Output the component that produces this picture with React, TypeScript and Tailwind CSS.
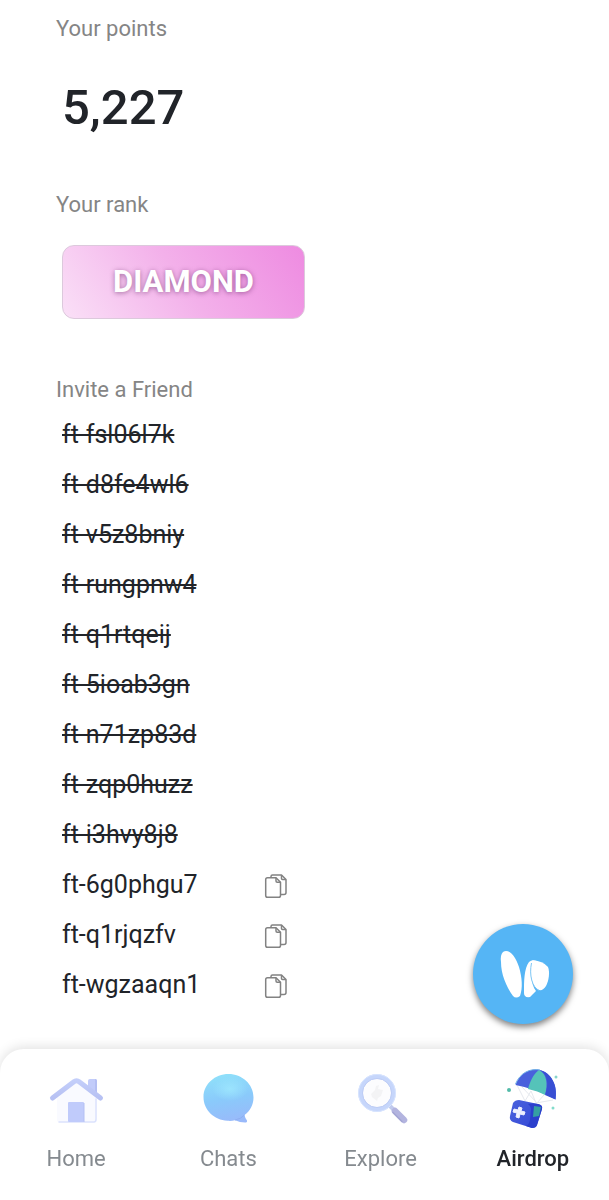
import { useState } from "react";

const invites = [
  { code: "ft-fsl06l7k", used: true },
  { code: "ft-d8fe4wl6", used: true },
  { code: "ft-v5z8bniy", used: true },
  { code: "ft-rungpnw4", used: true },
  { code: "ft-q1rtqeij", used: true },
  { code: "ft-5ioab3gn", used: true },
  { code: "ft-n71zp83d", used: true },
  { code: "ft-zqp0huzz", used: true },
  { code: "ft-i3hvy8j8", used: true },
  { code: "ft-6g0phgu7", used: false },
  { code: "ft-q1rjqzfv", used: false },
  { code: "ft-wgzaaqn1", used: false },
];

function CopyIcon() {
  return (
    <svg viewBox="0 0 24 26" className="h-[26px] w-6" fill="none" stroke="#828282" strokeWidth="1.5" strokeLinejoin="round">
      <path d="M7 4V3.500Q7 2 8.500 2H17.500L22 6.500V19.500Q22 21.500 20 21.500H17" />
      <path d="M17.500 2V5.500Q17.500 6.500 18.500 6.500H22" />
      <path d="M3.500 4.700H12L16.500 9.200V22.500Q16.500 24.300 14.700 24.300H3.500Q1.700 24.300 1.700 22.500V6.500Q1.700 4.700 3.500 4.700Z" />
      <path d="M12 4.700V8Q12 9.200 13.200 9.200H16.500" />
    </svg>
  );
}

function HomeIcon() {
  return (
    <svg viewBox="0 0 60 60" className="size-[60px]">
      <defs>
        <linearGradient id="roof" x1="0" y1="0" x2="0" y2="1">
          <stop offset="0" stopColor="#c3cefa" />
          <stop offset="1" stopColor="#b7c1f3" />
        </linearGradient>
      </defs>
      <path d="M42 12Q42 10 44 10H49Q51 10 51 12V27L42 20Z" fill="#c2ccfa" />
      <path d="M49 10Q51 10 51 12V27L49 25Z" fill="#b4bff3" />
      <path d="M30 12L51 28V51Q51 53 49 53H13Q11 53 11 51V28Z" fill="#f9faff" />
      <path d="M50 30V50Q50 53 48 53H13" fill="none" stroke="#dbe2fd" strokeWidth="1.5" strokeLinecap="round" />
      <path d="M6.5 29L27.500 13Q30.500 10.500 33.500 13L54.500 29" fill="none" stroke="url(#roof)" strokeWidth="5" strokeLinecap="round" />
      <rect x="22" y="33" width="16" height="20" rx="1" fill="#c0cbfb" />
      <path d="M38 34V53" stroke="#b4bff3" strokeWidth="1" />
    </svg>
  );
}

function ChatsIcon() {
  return (
    <svg viewBox="0 0 60 60" className="size-[60px]">
      <defs>
        <linearGradient id="bubble" x1="0.4" y1="0" x2="0.6" y2="1">
          <stop offset="0" stopColor="#8fe0fa" />
          <stop offset="0.5" stopColor="#8acafb" />
          <stop offset="1" stopColor="#99b9fa" />
        </linearGradient>
        <radialGradient id="bubbleLight" cx="0.5" cy="0.5" r="0.5">
          <stop offset="0" stopColor="#a2ecff" stopOpacity="0.7" />
          <stop offset="1" stopColor="#a2ecff" stopOpacity="0" />
        </radialGradient>
      </defs>
      <path d="M30.500 5C44 5 55.500 15 55.500 28.500C55.500 36 52 42 46.500 46Q47 49 49 51.500Q49.500 53.500 47 53.500Q42 53.500 37 51.300C34 52 32 52 29.500 51.800C16 51 5.500 41 5.500 28C5.500 15 17 5 30.500 5Z" fill="url(#bubble)" />
      <ellipse cx="32" cy="20" rx="18" ry="12" fill="url(#bubbleLight)" />
      <path d="M37 51Q43 50 46.500 46" fill="none" stroke="#8eaef2" strokeWidth="1" />
    </svg>
  );
}

function ExploreIcon() {
  return (
    <svg viewBox="0 0 60 60" className="size-[60px]">
      <path d="M39 37L43 41" stroke="#c1caed" strokeWidth="4" />
      <path d="M44 42L53 51" stroke="#b3b4df" strokeWidth="6.500" strokeLinecap="round" />
      <path d="M42 43.500L51 52.500" stroke="#a3a5d4" strokeWidth="1.500" strokeLinecap="round" />
      <circle cx="26" cy="24" r="16.500" fill="#fcfcfe" stroke="#c6d6fb" strokeWidth="4.500" />
      <circle cx="26" cy="24" r="18.500" fill="none" stroke="#d7e4ff" strokeWidth="1" />
      <circle cx="26" cy="24" r="14.500" fill="none" stroke="#bccbf5" strokeWidth="1" />
      <path d="M25 17L28 16L27 20L32 21L30 27L27 29L26 32L21 28L20 25L24 21Z" fill="#f3f3f5" />
    </svg>
  );
}

function AirdropIcon() {
  return (
    <svg viewBox="0 0 60 66" className="h-[66px] w-[60px]">
      <defs>
        <linearGradient id="crate" x1="0" y1="0" x2="1" y2="1">
          <stop offset="0" stopColor="#4a62dd" />
          <stop offset="1" stopColor="#3346d6" />
        </linearGradient>
      </defs>
      <g fill="none" stroke="#e6e9ee" strokeWidth="1">
        <path d="M14 19L22 35L28 25L33 37L50 34" />
        <path d="M19 21L34 37L41 29" />
      </g>
      <path d="M12.500 19C17 7 27 2 37 4C48 7 55 19 52.500 33.500Q34 23 12.500 19Z" fill="#4961dc" />
      <path d="M36 4C30 8 27 16 25 23Q35 25 42 29C45 18 44 8 36 4Z" fill="#55c3b9" />
      <path d="M37 4C45 9 46 19 42 29L52.500 33.500C55 19 48 7 37 4Z" fill="#384fd3" />
      <path d="M12.500 18C17 7 27 2 37 4" fill="none" stroke="#6eafe7" strokeWidth="1" />
      <path d="M10 37Q12 34 16 34L35 38Q40 39 39 43L34 59Q33 62 29 62L10 56Q6 54 7 50Z" fill="url(#crate)" />
      <path d="M25 38Q30 37 35 38Q40 39 39 43L34 59Q33 62 29 62L23 60Q26 59 27 54L28 43Q28 40 25 38Z" fill="#2b3fcc" />
      <path d="M31 40L38 41L36 50L30 51Z" fill="#359fa2" />
      <path d="M16 41L19 42L18 45L22 46L21 49L17 48L16 52L13 51L14 47L10 46L11 43L15 44Z" fill="#eef0ff" stroke="#eef0ff" strokeWidth="1" strokeLinejoin="round" />
      <circle cx="6" cy="24" r="2" fill="#53bba9" />
      <circle cx="53" cy="11" r="1.500" fill="#88d5cb" />
      <circle cx="50" cy="42" r="1.500" fill="#83dccb" />
    </svg>
  );
}

const tabs = [
  { label: "Home", icon: <HomeIcon /> },
  { label: "Chats", icon: <ChatsIcon /> },
  { label: "Explore", icon: <ExploreIcon /> },
  { label: "Airdrop", icon: <AirdropIcon /> },
];

export default function App() {
  const [active, setActive] = useState("Airdrop");

  const copyCode = (code: string) => {
    navigator.clipboard?.writeText(code);
  };

  return (
    <div className="flex min-h-screen flex-col bg-white font-['Roboto',sans-serif] text-[#212429]">
      <main className="flex-1 px-14 pt-[13px]">
        <h2 className="text-[22px] leading-8 text-[#858585]">Your points</h2>
        <p className="mt-8 pl-1.5 text-[49px] leading-[62px] font-medium">5,227</p>

        <h2 className="mt-[50px] text-[22px] leading-8 text-[#858585]">Your rank</h2>
        <div className="mt-6 ml-1.5 flex h-[74px] w-[243px] items-center justify-center rounded-xl border border-[#dcc9dc] bg-linear-[55deg] from-[#fae0f7] via-[#f3b0ea] to-[#ee8be1] text-[31px] font-bold text-white [text-shadow:0_1px_5px_rgba(80,20,80,0.5)]">
          DIAMOND
        </div>

        <h2 className="mt-[55px] text-[22px] leading-8 text-[#858585]">Invite a Friend</h2>
        <ul className="mt-1 pl-1.5">
          {invites.map(({ code, used }) => (
            <li key={code} className="flex h-[50px] w-[226px] items-center justify-between text-[25px]">
              {used ? <s className="decoration-2">{code}</s> : <span>{code}</span>}
              {!used && (
                <button type="button" aria-label={`Copy ${code}`} className="pt-0.5" onClick={() => copyCode(code)}>
                  <CopyIcon />
                </button>
              )}
            </li>
          ))}
        </ul>
      </main>

      <button
        type="button"
        aria-label="Open assistant"
        className="fixed right-9 bottom-44 flex size-[100px] items-center justify-center rounded-full bg-[#55b5f5] shadow-[0_3px_6px_rgba(0,0,0,0.5)]"
      >
        <svg viewBox="0 0 100 100" className="size-[100px]" fill="#fff">
          <path d="M30 28C36 24 43 33 46 43C49 53 50 64 47 72Q43 75 40 72C33 62 28 50 28 38Q27 31 30 28Z" />
          <path d="M56 38Q59 35 64 37C56 48 58 60 63 67L57 73Q51 74 51 69C51 57 51 45 56 38Z" />
          <path d="M59 36.500Q69 36 75 43C77 48 76 56 73 62Q70 67 66 66C58 63 56 48 59 36.500Z" />
          <path d="M58.500 39C56 51 59 63 66 66.500" fill="none" stroke="#7cc6f5" strokeWidth="1" />
        </svg>
      </button>

      <nav className="sticky bottom-0 grid grid-cols-4 rounded-t-3xl bg-white pt-5 pb-[25px] shadow-[0_-2px_12px_rgba(0,0,0,0.12)]">
        {tabs.map(({ label, icon }) => (
          <a
            key={label}
            href={`#${label.toLowerCase()}`}
            onClick={() => setActive(label)}
            className={`flex flex-col items-center text-[22px] leading-8 ${active === label ? "font-medium text-[#212429]" : "text-[#858a8f]"}`}
          >
            <span className="mb-3.5 flex h-[60px] items-center">{icon}</span>
            {label}
          </a>
        ))}
      </nav>
    </div>
  );
}
